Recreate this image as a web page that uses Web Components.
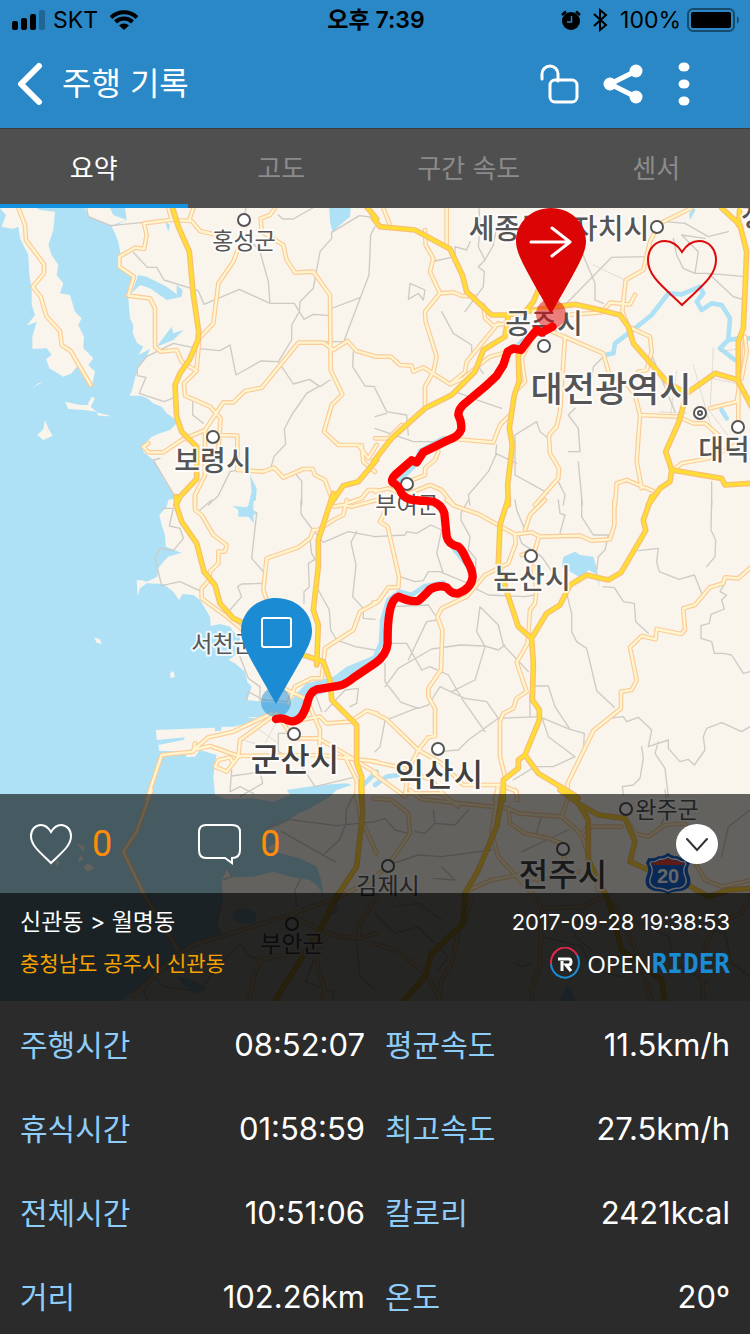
<!DOCTYPE html>
<html lang="ko">
<head>
<meta charset="utf-8">
<meta name="viewport" content="width=device-width, initial-scale=1">
<title>주행 기록</title>
<style>
    body {
        margin: 0;
        background: #2b2b2b;
        color: #fff;
        font-family: Inter, "Noto Sans CJK KR", sans-serif;
    }
</style>
</head>
<body>
<ride-record></ride-record>

<script>
class StatusBar extends HTMLElement {
    constructor() {
        super();
        this.attachShadow({ mode: 'open' });
        this.shadowRoot.innerHTML = `
            <style>
                :host {
                    display: grid;
                    grid-template-columns: 1fr auto 1fr;
                    align-items: center;
                    height: 40px;
                    padding: 0 10px 0 12px;
                    background: #2a88c6;
                    color: #000;
                    font-size: 23px;
                    line-height: 40px;
                }
                .side { display: flex; align-items: center; gap: 8px; }
                .right { justify-content: flex-end; }
                .time { font-weight: 600; }
                svg { display: block; }
                .wifi { margin-left: 4px; }
                .bt { margin: 0 4px; }
                .battery { margin-left: -2px; }
            </style>
            <div class="side">
                <svg width="33" height="20" viewBox="0 0 33 20" aria-hidden="true">
                    <rect y="11" width="6" height="9" rx="2"/><rect x="9" y="8" width="6" height="12" rx="2"/>
                    <rect x="18" y="4" width="6" height="16" rx="2"/><rect x="27" width="6" height="20" rx="2" opacity=".25"/>
                </svg>
                <span>SKT</span>
                <svg class="wifi" width="28" height="20" viewBox="0 0 28 20" aria-hidden="true">
                    <g fill="none" stroke="#000" stroke-width="4"><path d="M1 7.500a18.500 18.500 0 0 1 26 0"/><path d="M5.500 12a12 12 0 0 1 17 0"/></g>
                    <path d="M9 15.500a7 7 0 0 1 10 0L14 20Z"/>
                </svg>
            </div>
            <div class="time">오후 7:39</div>
            <div class="side right">
                <svg width="20" height="20" viewBox="0 0 20 20" aria-hidden="true">
                    <circle cx="10" cy="11" r="9"/><path d="M1 5 5 1.500M19 5l-4-3.500" stroke="#000" stroke-width="2.500"/>
                    <path d="M10.500 6v6H6" fill="none" stroke="#2a88c6" stroke-width="1.500"/>
                </svg>
                <svg class="bt" width="15" height="24" viewBox="0 0 15 24" fill="none" stroke="#000" stroke-width="2" aria-hidden="true"><path d="m1 6 12 11-6 5V2l6 5L1 18"/></svg>
                <span>100%</span>
                <svg class="battery" width="53" height="24" viewBox="0 0 53 24" aria-hidden="true">
                    <rect x="1" y="1" width="46" height="22" rx="5" fill="none" stroke="#000" stroke-opacity=".45" stroke-width="2"/>
                    <rect x="4" y="4" width="40" height="16" rx="2"/><path d="M50 8a5 5 0 0 1 0 8Z" opacity=".45"/>
                </svg>
            </div>`;
    }
}

class TitleBar extends HTMLElement {
    constructor() {
        super();
        this.attachShadow({ mode: 'open' });
        this.shadowRoot.innerHTML = `
            <style>
                :host {
                    display: flex;
                    align-items: center;
                    gap: 18px;
                    height: 88px;
                    padding: 0 60px 0 16px;
                    background: #2a88c6;
                }
                h1 { flex: 1; margin: 0; font-size: 32px; font-weight: 400; line-height: 48px; }
                button { padding: 0; border: 0; background: none; color: inherit; }
                svg { display: block; }
                .actions { display: flex; align-items: center; gap: 24px; }
                .more { margin-left: 11px; }
            </style>
            <button aria-label="뒤로">
                <svg width="28" height="44" viewBox="0 0 28 44" fill="none" stroke="#fff" stroke-width="6" stroke-linecap="round" stroke-linejoin="round"><path d="M23 4 5 22l18 18"/></svg>
            </button>
            <h1><slot></slot></h1>
            <div class="actions">
                <button aria-label="잠금 해제">
                    <svg width="40" height="40" viewBox="0 0 40 40" fill="none" stroke="#fff" stroke-width="3" stroke-linecap="round"><path d="M3 15V10a8 8 0 0 1 16 0v7"/><rect x="11" y="16" width="27" height="22" rx="5"/></svg>
                </button>
                <button aria-label="공유">
                    <svg width="40" height="40" viewBox="0 0 40 40" fill="#fff"><path d="M33 7 7 20l26 13" fill="none" stroke="#fff" stroke-width="5"/><circle cx="7" cy="20" r="6.500"/><circle cx="33" cy="7" r="6.500"/><circle cx="33" cy="33" r="6.500"/></svg>
                </button>
                <button class="more" aria-label="더보기">
                    <svg width="12" height="44" viewBox="0 0 12 44" fill="#fff"><ellipse cx="6" cy="5" rx="5.500" ry="4.500"/><ellipse cx="6" cy="22" rx="5.500" ry="4.500"/><ellipse cx="6" cy="39" rx="5.500" ry="4.500"/></svg>
                </button>
            </div>`;
    }
}

class RecordTabs extends HTMLElement {
    constructor() {
        super();
        this.attachShadow({ mode: 'open' });
        this.shadowRoot.innerHTML = `
            <style>
                :host { display: block; border-top: 1px solid #3c3c3c; background: #4f4f4f; }
                .tabs { display: grid; grid-template-columns: repeat(4, 1fr); }
                button {
                    height: 79px;
                    padding: 0;
                    border: 0;
                    border-bottom: 4px solid transparent;
                    background: none;
                    color: #8b8b8b;
                    font: inherit;
                    font-size: 26px;
                }
                button[aria-selected=true] { color: #fff; border-color: #1592e0; }
            </style>
            <div class="tabs" role="tablist">
                <button role="tab" aria-selected="true">요약</button>
                <button role="tab" aria-selected="false">고도</button>
                <button role="tab" aria-selected="false">구간 속도</button>
                <button role="tab" aria-selected="false">센서</button>
            </div>`;
        this.shadowRoot.querySelector('.tabs').addEventListener('click', e => {
            const tab = e.target.closest('button');
            if (!tab) return;
            this.shadowRoot.querySelectorAll('button').forEach(b => b.setAttribute('aria-selected', b === tab));
        });
    }
}

// The map is cut in six tiles of 375x300, each drawn at three units per pixel.
const TILES = [[0, 0], [1125, 0], [0, 885], [1125, 885], [0, 1755], [1125, 1755]];

const SEA = 'M375 9 380 45 355 58 335 65 345 85 355 110 362 150 365 185 398 215 400 235 385 280 390 340 400 360 398 385 412 415 430 425 415 450 450 432 440 455 415 485 405 520 395 560 388 572 420 572 440 578 460 595 485 605 500 625 528 645 530 655 510 675 480 685 455 695 440 710 428 720 430 740 460 765 470 780 490 820 528 880 505 885 500 905 478 930 485 960 495 990 497 1025 545 1043 505 1055 490 1070 475 1090 472 1115 440 1130 425 1126 410 1125 413 1175 420 1150 440 1135 490 1137 520 1160 537 1185 548 1167 580 1170 600 1185 618 1215 630 1235 632 1263 660 1257 690 1265 700 1280 720 1295 720 1330 700 1355 685 1365 705 1375 735 1400 742 1430 755 1445 745 1475 740 1485 790 1490 870 1495 890 1465 920 1435 1000 1415 1040 1385 1125 1350 1160 1330 1160 1360 1090 1410 1000 1455 940 1475 920 1525 870 1550 820 1525 790 1538 735 1535 790 1545 770 1550 700 1565 665 1565 663 1578 645 1578 645 1568 468 1575 470 1605 555 1597 550 1605 475 1620 478 1637 555 1640 560 1657 585 1655 600 1635 650 1650 645 1675 640 1715 645 1770 680 1783 760 1780 820 1790 870 1770 860 1755 960 1740 1040 1735 1055 1740 1010 1755 990 1775 920 1815 895 1825 860 1850 800 1875 840 1905 800 1930 840 1945 900 1960 950 1985 965 2030 970 2075 955 2045 930 2025 870 2015 820 2000 760 2015 700 2017 680 1995 665 2025 668 2085 650 2155 665 2185 590 2225 535 2245 510 2290 460 2315 380 2375 355 2395H0V9Z';

const ISLANDS = 'M0 9H110L120 15 165 20 160 75 145 120 155 150 175 180 170 210 190 235 180 265 210 270 225 320 245 340 235 360 252 395 250 430 280 460 265 480 285 500 275 545 268 520 240 500 235 480 215 505 190 515 148 490 138 462 155 450 140 430 97 432 97 395 110 350 80 362 105 330 95 300 95 250 88 210 85 150 60 100 55 65 40 72 5 65 18 30ZM255 9 265 35 333 62 380 45 340 30 330 9ZM195 590 240 600 262 600 275 575 285 580 272 605 290 620 250 615 205 612ZM290 622 335 634 295 632ZM135 645 145 670 158 692 130 705 112 690 130 672ZM97 550 115 535 130 530 107 543ZM282 1297 300 1303 305 1317 290 1313ZM510 1405 520 1398 525 1415 512 1420ZM228 1915 255 1925 250 1938ZM265 1975 285 1990 262 2000 250 1985ZM165 1960 180 1975 170 1985ZM240 1950 252 1962 235 1970Z';

const LAKES = [
    'M395 265 415 210 440 215 500 245 530 268 530 240 548 255 545 275 500 285 450 250 420 240ZM470 425 515 365 520 385 550 375 520 405ZM988 9H1052L1050 35 1020 60 998 82 990 50ZM750 810 770 850 768 885 745 900 755 860ZM495 50 510 60 505 80Z',
    'M955 9 962 15 945 45 943 25Z',
    'M698 18 740 22 760 0 760 30 775 40 760 45 762 70 745 50 715 50 715 30Z',
    'M565 170 600 155 615 165 655 170 665 205 675 260 660 220 640 210 620 235 560 200Z',
    'M705 360 740 355 770 370 765 400 720 400 695 385ZM980 350 1015 345 1010 370 985 375ZM530 560 560 565 610 585 620 600 580 610 555 590Z',
    'M575 585 590 600 605 640 540 640 560 620Z'
];

const RIVERS = [
    '',
    'M1125 400 1090 400 1060 405 1035 430 1080 465M690 450 715 445 720 415 780 370 830 330 880 265 920 268 975 245 985 265 965 290 980 315 1010 295 1040 300 1065 340 1060 400M540 372 450 400 420 430M205 700 135 738 120 780 70 830 60 855M1040 615 1055 640',
    'M1085 860 1130 815',
    'M210 100 240 150 280 200M205 248 150 258 110 285 75 275 40 300 22 360 18 430 0 470M0 855 35 830 70 825',
    '', ''
];

const BORDERS = [
    'M260 9 265 35 333 62 430 52M400 142 442 187 470 187 492 225 595 257 612 298 718 253 810 295 883 295 912 343 940 328 990 332M760 115 780 140 805 230 810 295M835 30 848 42 880 42 938 9M1125 38 1078 32 995 82 995 100 960 140 940 250 900 290 898 320 875 360 875 405 835 470 782 468 708 510 690 420 660 437 590 430 520 415 440 455 412 490 412 512 438 517 418 565 492 590 530 575M1125 65 1112 90 1107 210 1033 405M990 312 1080 278M835 470 880 537 928 523 960 545 990 525M955 545 920 565 875 630 853 672 857 717 822 755 812 790M1060 440 1058 485 1095 543 1125 545M578 590 578 630 610 655M480 760 460 765 528 880M740 790 690 800 655 872 625 900M885 805 905 828 905 900M960 410H1040M738 9 735 25',
    'M312 9 315 70 310 125 330 165 355 120 365 65 390 40M330 165 310 185 328 200 325 245 270 320M180 168 240 155 240 125 275 135 285 110M100 283 105 235 150 255 145 285 130 265ZM200 320 235 385 290 420 290 440M620 140 660 235 660 285 685 295M575 295 710 157 820 155M895 100 905 150 925 190 960 205 1000 205 1110 215M1000 205 1075 275 1110 285M990 100 920 90 970 140 960 205M0 550 35 620 95 630 100 690M0 635 35 625M0 670 115 710 190 710 210 695M380 610 320 590 240 560M325 505 310 485M600 610 580 630 610 670 615 740 580 740M420 690 485 650 495 680 520 700M420 690 420 810 520 865M365 720 362 745 425 775M365 745 340 800 280 870 285 900M610 770 622 900M550 830 570 870 565 900M1010 830V900M830 450 900 620M650 520 655 485 685 455M870 50 930 55 1000 95 1060 80',
    'M635 0 600 30M490 25 520 25 508 78 540 85 550 115 520 152 480 145 465 175 485 257 540 245 605 275M903 0 903 42 940 92 970 127 1045 95 1125 110M1070 95 1053 127 1068 195 1058 290 1090 325 1090 355 1125 358M930 115 935 160 945 178 925 190 928 260 912 275 912 310M770 40 755 175 790 215M790 250 725 252 713 260 725 290 690 330M955 270 988 330 992 390 1010 420 1065 440 1125 450M720 470 745 535 780 560 780 605M740 600 745 575 790 600 870 605M945 580 965 635M975 635 1035 570 1075 565 1070 610 1050 620M695 810 690 875 720 860 760 880M695 828 790 815M775 790 788 850 720 890M835 700H895M835 700V755L900 790 945 860 1070 830',
    'M790 152 850 145 845 185 853 215 912 238 958 225 980 280M1010 0 1008 90 1022 120 1020 170 995 200M685 260 718 263 745 305 778 310 782 365 820 400M575 280 590 340 590 395 605 425 635 445 665 572 718 622M1050 250 1035 275 1055 285 1040 300 1048 327 1008 343 1003 370 978 377 978 415 1010 425 1018 460 1045 460 1070 465 1105 520 1125 515M300 265 340 285 450 290 480 285M700 655 745 650 755 665 790 652 820 680 830 690 820 740 880 720 880 745 915 785 940 778 958 795 990 750 985 710 995 685 1040 668 1100 695 1125 680M800 740 805 775 795 835 775 855 742 860 745 885M850 725 840 760 870 805 880 890M30 490 30 545 78 607 130 625 160 615 195 560 270 595 335 605 370 655M130 622 30 662 15 740 0 755M30 560 70 505 170 447 255 435 330 438 370 450 390 435M230 575 300 540 330 440 305 395 315 320 370 375 385 435 460 515M260 595 330 695M190 755 250 750 280 720 370 655 500 650 520 710 600 770 535 800 480 800 415 840M505 655 585 688 628 700 625 760M475 558 520 558 540 620 585 688M465 580V650M280 0 258 40 258 60 285 110 280 150 302 175 302 260M0 110 90 105 95 95 125 100 168 75 200 90 185 160 205 220M75 230 120 245 145 242 160 215 195 215 290 255M420 0 425 30 450 90M550 0 555 40 570 45 555 100M620 0 620 50 655 105 700 105 690 150 670 170 665 210M430 100 440 130 500 170 545 235M50 320 160 315 180 345M50 430 95 430 140 510 165 500 220 525 255 585M100 480 155 365 185 360',
    'M1070 0 1038 60 1038 100 1018 150 975 190M800 115 865 88 1010 107 1125 95M845 125 1005 215M905 260 885 300 890 350M668 270 695 260 685 240M668 330 650 400 660 430M430 600 445 640M465 560 490 590 600 605 630 560 720 460 750 500 790 510M915 575 950 490M915 575 1000 605 1000 640M1070 450 1080 560 1125 600',
    'M0 95 30 85 60 120 100 130M175 60 180 100 240 105 280 60M180 100 150 130 120 125M40 225 130 195 200 200 350 180M175 265 240 270 200 230M200 390 130 340 60 350M0 370 60 430 130 410 220 500 190 540M420 520 440 530 470 520M500 440 620 470 650 540 740 560M870 0 880 60 860 100M800 400 880 440 900 520 1000 580M960 410 1050 430 1070 520 1125 560M620 360 600 440 650 480M1125 60 1060 110 1040 200M440 185 580 120M500 80 480 140'
];

const ROADS = [
    'M55 9 75 60 78 105 132 178 132 205 98 245 122 275 140 335 180 378 185 420 212 438 272 540M510 45 432 55 440 90 432 132 405 128 358 155 358 185 402 215 385 272 450 280 465 310 465 425 482 440 530 435 545 470 590 498 552 535 555 572 630 605 662 640 655 735M505 9 515 45 575 48 600 78 650 90M580 9 568 45M825 9 810 30 782 40 785 80 850 120 860 165 885 203 940 200 990 270 992 495 1027 568 995 600 972 680 1015 720 1075 720 1105 760 1130 720M1085 720 1090 770 1125 800M715 130 700 170 655 235 640 355 598 400 590 490M445 715 430 725 445 742 490 742 545 705 615 675 645 630 670 592 700 592 735 558 785 548 895 413 970 413 1000 435 1042 408 1070 438 1130 455M655 690 712 692 712 795 790 800 822 788 850 818 910 792 938 792 945 810 975 825 995 880M615 680V810L585 870V900M1130 855 1105 855 1085 880 1040 895',
    'M25 9 45 60M215 9V120M150 75 152 120 175 160 165 200 195 265 150 320 152 350 185 455 175 500 150 545 150 600M195 265 235 262 260 272 300 275M0 455 48 455 75 480 110 482 115 500 145 487 225 538 265 520 325 470 345 455 400 440M370 355 275 470 270 500 225 538M325 300 330 340 355 362 395 355M845 70 825 110 805 195 752 225 742 320 760 365 825 395 830 440 815 495 790 500M845 60 950 9M575 330 680 322 705 293 765 298 780 270M520 375 685 445 705 515 750 530 780 570 795 630 785 770 800 850M570 395 555 620 545 665 522 690 525 745 552 790 550 820 480 900M465 410 440 460 450 530 430 550M405 630 375 660 355 712 240 702M795 630 910 635 955 655 990 655 1030 690M1100 390 1090 560 1085 590 1005 610M1090 560V650M895 795 920 775 1000 760 1080 720M720 900 725 835 755 825 835 858M0 700 40 700 80 660M190 740 180 765 150 790 150 810 100 830M0 860 40 850 90 870 165 840 200 855 235 900M1110 395 1115 440 1100 520',
    'M585 -10V30L605 45 640 105 680 135 675 155 655 155 655 190 630 215 628 240 605 265 605 295 680 350 735 395M1130 0 1055 20 1030 15 1000 20M1000 60 1030 45 1040 0M1000 60 955 90 940 90 930 115 895 142 800 175 790 270 800 300M1130 308 1080 335 1060 390 975 445 965 535 935 535 885 560 865 610M850 565 925 600 930 620 960 690 958 760M890 662 960 650 980 670 1050 665 1100 632 1130 640M815 640 700 695 625 712 580 750 630 738 715 768 720 720 830 640 880 715M585 730 580 755 485 765 440 900M715 768 960 765 1130 785M715 770 680 815 645 800 655 780 690 772 700 790M880 715 955 715 1040 765 1130 820M1035 770 1070 840V900',
    'M215 0 240 18 310 42 420 103 470 97 495 110 615 107 650 122 705 118 718 75V0M450 90 465 45 510 0M420 103 422 130 400 190 330 225 275 290 200 325 187 350 202 390 198 510 160 565 160 590 180 625 180 708 160 712 130 750 100 810 90 890M490 115 480 150 440 165M475 200 485 270 480 310 465 330 458 430 425 487 455 575 425 595 415 625 385 640 375 665 375 770 390 830M15 65 38 80 72 230 70 262 40 262 10 305 -5 308M15 65 45 0M-5 638 35 658 130 750 200 790 265 855 380 855 425 875V900M-5 785 90 805M-5 820 90 890M1130 200 1090 235 1050 232 1045 250 1005 262 960 315 925 325 930 390 918 402 845 387 842 418 800 408 765 442 785 540 770 570 738 575 738 625 655 692 578 850 578 885M370 855 360 900M130 825 170 840 220 900',
    'M455 0 410 125 370 185 430 310 540 490 480 540 400 620M540 490 580 465 870 375 1025 318 1130 260M1070 0 1080 80 1130 190M870 375 940 410 985 430 1020 440 1080 445 1130 430M985 430 960 470 780 510 765 550 745 640M980 440 945 475 955 540 975 600 960 640M1130 320 1080 400 1075 440',
    'M-5 25 50 30 100 70 105 130 40 225 -5 265M105 0 140 28 400 55 430 70 560 80 580 20 575 0M90 10H200L250 50M370 0 350 130 370 200 480 320 500 355 495 520 470 600 470 640M400 55 405 100 450 130 520 145 560 160 570 210M420 0 430 30M560 80 605 120 625 150 640 200 670 300M270 305 350 270 430 255 490 270 610 245M290 330 250 430 230 520 200 570 190 640M500 355 620 350 690 320M620 130 640 110 740 110M755 90 780 130 820 140 870 105 930 100 950 200 990 270 1040 290 1130 270M-5 460 60 480 90 500 160 560 200 640M720 340 800 520 830 640M1125 320 1100 370 1020 400 980 500 985 640'
];

const HIGHWAYS = [
    'M518 9 535 65 568 140 580 270 596 380 594 405 568 465 540 505 525 540 530 635 545 680 590 725 590 822 540 875 528 900M1100 5 1130 42M1130 765 1075 830 1030 842 990 900',
    'M-5 40 15 65 120 75 225 132 262 210 275 260 350 330 400 330 450 320 545 305 600 298 655 310 735 330 760 365 775 415 880 535 935 565 1020 505 1090 525M490 255 475 290 455 315M400 330 390 395 325 435 300 500 230 570 150 610 50 700 -5 770M1040 9 1095 60 1115 140 1105 370 1090 410 1090 530 1130 605M1090 60 1095 5M935 565 912 650 872 740 890 795 1040 820 1050 840 1130 835M890 795 885 830 855 850 820 900M430 440 432 530 418 570 403 670 412 720 398 840 400 900',
    'M528 -10 530 20 545 65 590 130 612 215 645 255 660 310 700 355 745 375M910 465 970 485 990 540 995 600 1070 675 1070 790 1085 830V900M1000 -20 955 120 955 200 940 330 955 375 950 495',
    'M400 -5 375 75 370 190 400 290 430 380 470 415 475 490 472 600 493 630 493 660 450 765 430 780 430 805 385 840V900M470 415 515 340 555 315 585 255 635 225 700 240 738 218 812 92 805 60 830 -10M450 765 490 820 590 880 610 895',
    'M1085 0 1088 70 1070 230 1010 320 965 410 895 520 820 640',
    'M385 0 365 110 310 240 270 310 265 400 170 490 150 560 80 640M555 0 610 40 640 90 640 210 700 330 740 480 860 570 870 640M610 40 670 75 750 85 780 155 765 215 820 240 930 280 1000 320 1060 300 1130 295'
];

const tiled = paths => paths.map((d, i) => d && `<path transform="translate(${TILES[i]})" d="${d}"/>`).join('');

// x, y of the label, size, text, then x, y of its marker
const CITIES = [
    [244, 41, 's', '홍성군', 244, 12],
    [213, 263, 'm', '보령시', 213, 229],
    [559, 31, 'm', '세종특별자치시', 657, 19],
    [544, 126, 'm', '공주시', 544, 138],
    [611, 194, 'xl', '대전광역시', 700, 205],
    [724, 252, 'm', '대덕', 738, 219],
    [407, 305, 's', '부여군', 407, 276],
    [532, 381, 'm', '논산시', 531, 348],
    [223, 444, 's', '서천군'],
    [295, 563, 'l', '군산시', 294, 526],
    [439, 578, 'l', '익산시', 438, 541],
    [667, 610, 's', '완주군', 626, 601],
    [563, 678, 'l', '전주시', 563, 641],
    [388, 686, 's', '김제시', 388, 658],
    [292, 744, 's', '부안군', 292, 716]
];

class RouteMap extends HTMLElement {
    constructor() {
        super();
        this.attachShadow({ mode: 'open' });
        const markers = CITIES.filter(c => c[4]).map(c => `<circle cx="${c[4]}" cy="${c[5]}" r="6"/>`).join('');
        const labels = CITIES.map(c => `<text class="${c[2]}" x="${c[0]}" y="${c[1]}">${c[3]}</text>`).join('');
        this.shadowRoot.innerHTML = `
            <style>
                :host { display: grid; position: relative; }
                svg { display: block; width: 100%; }
                .map, .over { grid-area: 1 / 1; min-width: 0; }
                .over { align-self: end; position: relative; }
                .lines { fill: none; stroke-linejoin: round; stroke-linecap: round; }
                .water { fill: #aee1f6; }
                .land { fill: #f9f4ec; }
                .markers { fill: #fff; stroke: #555; stroke-width: 2; }
                text {
                    fill: #555;
                    stroke: #fff;
                    stroke-opacity: .8;
                    stroke-width: 4;
                    stroke-linejoin: round;
                    paint-order: stroke;
                    font-family: "Noto Sans CJK KR", sans-serif;
                    font-weight: 500;
                    text-anchor: middle;
                }
                .s { font-size: 23px; font-weight: 400; }
                .m { font-size: 28px; }
                .l { font-size: 32px; fill: #404040; }
                .xl { font-size: 35px; }
                .shield { fill: #fff; stroke: none; font: bold 20px "Liberation Sans", sans-serif; }
                .like {
                    position: absolute;
                    top: 31px;
                    right: 32px;
                    width: 72px;
                    padding: 0;
                    border: 0;
                    background: none;
                }
            </style>
            <svg class="map" viewBox="0 0 750 793" role="img" aria-label="주행 경로 지도">
                <rect class="land" width="750" height="793"/>
                <g transform="translate(0 -3) scale(.33333)">
                    <path class="water" d="${SEA}"/>
                    <path class="land" d="${ISLANDS}"/>
                    <g class="water">${tiled(LAKES)}</g>
                    <g class="lines">
                        <g stroke="#aee1f6" stroke-width="14">${tiled(RIVERS)}</g>
                        <g stroke="#cdcbc5" stroke-width="4">${tiled(BORDERS)}</g>
                        <g stroke="#cdcbc5" stroke-width="2" stroke-dasharray="6 4">
                            <path d="M1780 180 1875 225M765 1565 835 1615M830 1550 790 1625M730 1605 780 1620M2140 430 2130 620 2190 700M2160 440 2225 430 2215 560M2030 500 2010 640M1980 620 2060 625M2135 520 2230 540M2080 480 2140 690"/>
                        </g>
                        <g stroke="#fbcb98" stroke-width="14">${tiled(ROADS)}</g>
                        <g stroke="#fff5cf" stroke-width="7">${tiled(ROADS)}</g>
                        <g stroke="#f8bd78" stroke-width="17">${tiled(HIGHWAYS)}</g>
                        <g stroke="#ffdd33" stroke-width="10">${tiled(HIGHWAYS)}</g>
                    </g>
                </g>
                <g class="markers">${markers}<circle cx="700" cy="205" r="2"/></g>
                ${labels}
                <text class="m" x="754" y="19">청</text>
                <g transform="translate(647 646)" stroke-linejoin="round">
                    <path id="shield" d="M2 5Q8 6 12 3 17 4 21 0 25 4 30 3 34 6 40 5L42 9Q38 15 41 21 46 33 34 36 26 36 21 39 16 36 8 36-4 33 1 21 4 15 0 9Z" fill="#1565d8" stroke="#1565d8" stroke-width="2"/>
                    <path d="M4 8Q9 8 13 5 17 6 21 3 25 6 29 5 33 8 38 8L39 10Q35 15 38 22 42 31 33 34 26 34 21 37 16 34 9 34 0 31 4 22 7 15 3 10Z" fill="#1565d8" stroke="#fff" stroke-width="1.500"/>
                    <path d="M5 8Q9 9 13 6 17 7 21 4 25 7 29 6 33 9 37 8L36 11H6Z" fill="#e8473c"/>
                </g>
                <text class="shield" x="668" y="675">20</text>
                <circle cx="551" cy="106" r="15" fill="#e00606" fill-opacity=".5"/>
                <circle cx="276" cy="494" r="15" fill="#1b8bd3" fill-opacity=".5"/>
                <path class="lines" transform="translate(0 -3) scale(.33333)" stroke="#f00" stroke-width="25" d="M1658 365 1625 383 1610 375 1585 405 1563 435 1540 430 1523 440 1510 480 1490 512 1455 545 1395 595Q1376 610 1375 630 1387 655 1383 675 1375 695 1345 705L1270 742 1250 772 1235 766 1185 810Q1170 825 1180 834 1195 840 1205 865 1215 882 1240 885L1300 890Q1325 900 1333 925L1340 995Q1345 1018 1375 1025 1388 1035 1400 1065 1418 1095 1418 1115 1415 1150 1375 1165 1355 1168 1340 1147 1315 1138 1290 1153 1270 1175 1255 1187 1235 1193 1195 1175 1178 1180 1170 1215 1162 1255 1163 1315 1160 1350 1125 1375L1065 1415Q1035 1440 1015 1443L950 1453Q930 1460 923 1490 905 1560 865 1547 850 1537 828 1542"/>
                <g fill="none" stroke="#fff" stroke-width="2" stroke-linecap="round" stroke-linejoin="round">
                    <path d="M551 0C570 0 586 14 586 33 586 46 577 60 551 106 525 60 516 46 516 33 516 14 532 0 551 0Z" fill="#db0505" stroke="none"/>
                    <path d="M531 34H570M552 20 570 34 552 48" stroke-width="3"/>
                    <path d="M276 390C296 390 312 404 312 423 312 436 302 450 276 496 250 450 241 436 241 423 241 404 257 390 276 390Z" fill="#1b8bd3" stroke="none"/>
                    <rect x="262" y="410" width="29" height="29" rx="2"/>
                </g>
            </svg>
            <button class="like" aria-label="좋아요">
                <svg viewBox="0 0 72 68" fill="none" stroke="#dc0b0b" stroke-width="2"><path d="M36 13C41 5 46 2 53 2 63 2 70 10 70 21 70 38 53 49 36 66 19 49 2 38 2 21 2 10 9 2 19 2 26 2 31 5 36 13Z"/></svg>
            </button>
            <div class="over"><slot></slot></div>`;
    }
}

class ReactionBar extends HTMLElement {
    constructor() {
        super();
        this.attachShadow({ mode: 'open' });
        this.shadowRoot.innerHTML = `
            <style>
                :host {
                    display: flex;
                    align-items: center;
                    height: 99px;
                    padding: 0 32px 0 28px;
                    background: rgba(0,0,0,.6);
                }
                button { padding: 0; border: 0; background: none; }
                .count {
                    display: flex;
                    align-items: center;
                    gap: 19px;
                    margin-right: 84px;
                    color: #ff8c0a;
                    font-family: Roboto, sans-serif;
                    font-size: 36px;
                    line-height: 44px;
                }
                svg { display: block; }
                .toggle { margin-left: auto; border-radius: 50%; background: #fff; }
            </style>
            <button class="count" aria-label="좋아요 0">
                <svg width="45" height="42" viewBox="0 0 45 42" fill="none" stroke="#fff" stroke-width="2"><path d="M23 9C26 4 29 2 33 2 39 2 43 7 43 13 43 23 33 30 23 40 13 30 3 23 3 13 3 7 7 2 13 2 17 2 20 4 23 9Z"/></svg>
                <span>0</span>
            </button>
            <button class="count" aria-label="댓글 0">
                <svg width="45" height="42" viewBox="0 0 45 42" fill="none" stroke="#fff" stroke-width="2"><path d="M10 2H36Q44 2 44 9V27Q44 35 36 35V40L29 35H10Q3 35 3 27V9Q3 2 10 2Z"/></svg>
                <span>0</span>
            </button>
            <button class="toggle" aria-label="접기">
                <svg width="42" height="40" viewBox="0 0 42 40" fill="none" stroke="#333" stroke-width="2" stroke-linecap="round"><path d="m11 15 10 11 10-11"/></svg>
            </button>`;
    }
}

class RideInfo extends HTMLElement {
    constructor() {
        super();
        this.attachShadow({ mode: 'open' });
        this.shadowRoot.innerHTML = `
            <style>
                :host {
                    display: block;
                    padding: 8px 20px 16px;
                    background: rgba(0,0,0,.85);
                    line-height: 42px;
                }
                div { display: flex; justify-content: space-between; align-items: center; }
                .route { font-size: 23px; }
                .date { font-size: 22px; }
                .place { color: #f7a200; font-size: 21px; }
                .brand { display: flex; align-items: center; font-size: 24px; font-family: "Open Sans", sans-serif; }
                .brand svg { margin-right: 7px; }
                .brand b { color: #1b8bd3; font-family: "DejaVu Sans Mono", monospace; font-size: 26px; }
            </style>
            <div><span class="route"><slot name="route"></slot></span><span class="date"><slot name="date"></slot></span></div>
            <div>
                <span class="place"><slot name="place"></slot></span>
                <span class="brand">
                    <svg width="30" height="34" viewBox="0 0 30 34" fill="none" aria-hidden="true">
                        <g stroke-width="2"><path d="M1 17A14 15 0 0 1 27 8" stroke="#e0264f"/><path d="M27 8A14 15 0 1 1 1 17" stroke="#1b8bd3"/></g>
                        <path d="M8 12H19Q21 12 21 15 21 18 18 18H16L21 24M12 14V24" stroke="#fff" stroke-width="3"/>
                    </svg>OPEN<b>RIDER</b>
                </span>
            </div>`;
    }
}

class RideStat extends HTMLElement {
    constructor() {
        super();
        this.attachShadow({ mode: 'open' });
        this.shadowRoot.innerHTML = `
            <style>
                :host { display: flex; justify-content: space-between; line-height: 48px; }
                .label { color: #8fcdf9; font-size: 30px; }
                .value { font-size: 31px; }
            </style>
            <span class="label"></span><span class="value"><slot></slot></span>`;
    }

    connectedCallback() {
        this.shadowRoot.querySelector('.label').textContent = this.getAttribute('label');
    }
}

class RideRecord extends HTMLElement {
    constructor() {
        super();
        this.attachShadow({ mode: 'open' });
        this.shadowRoot.innerHTML = `
            <style>
                :host { display: block; overflow: hidden; }
                .stats {
                    display: grid;
                    grid-template-columns: 1fr 1fr;
                    gap: 36px 20px;
                    padding: 20px 20px 13px;
                }
            </style>
            <status-bar></status-bar>
            <title-bar>주행 기록</title-bar>
            <record-tabs></record-tabs>
            <route-map>
                <reaction-bar></reaction-bar>
                <ride-info>
                    <span slot="route">신관동 &gt; 월명동</span>
                    <span slot="date">2017-09-28 19:38:53</span>
                    <span slot="place">충청남도 공주시 신관동</span>
                </ride-info>
            </route-map>
            <div class="stats">
                <ride-stat label="주행시간">08:52:07</ride-stat>
                <ride-stat label="평균속도">11.5km/h</ride-stat>
                <ride-stat label="휴식시간">01:58:59</ride-stat>
                <ride-stat label="최고속도">27.5km/h</ride-stat>
                <ride-stat label="전체시간">10:51:06</ride-stat>
                <ride-stat label="칼로리">2421kcal</ride-stat>
                <ride-stat label="거리">102.26km</ride-stat>
                <ride-stat label="온도">20º</ride-stat>
            </div>`;
    }
}

customElements.define('status-bar', StatusBar);
customElements.define('title-bar', TitleBar);
customElements.define('record-tabs', RecordTabs);
customElements.define('route-map', RouteMap);
customElements.define('reaction-bar', ReactionBar);
customElements.define('ride-info', RideInfo);
customElements.define('ride-stat', RideStat);
customElements.define('ride-record', RideRecord);
</script>
</body>
</html>
